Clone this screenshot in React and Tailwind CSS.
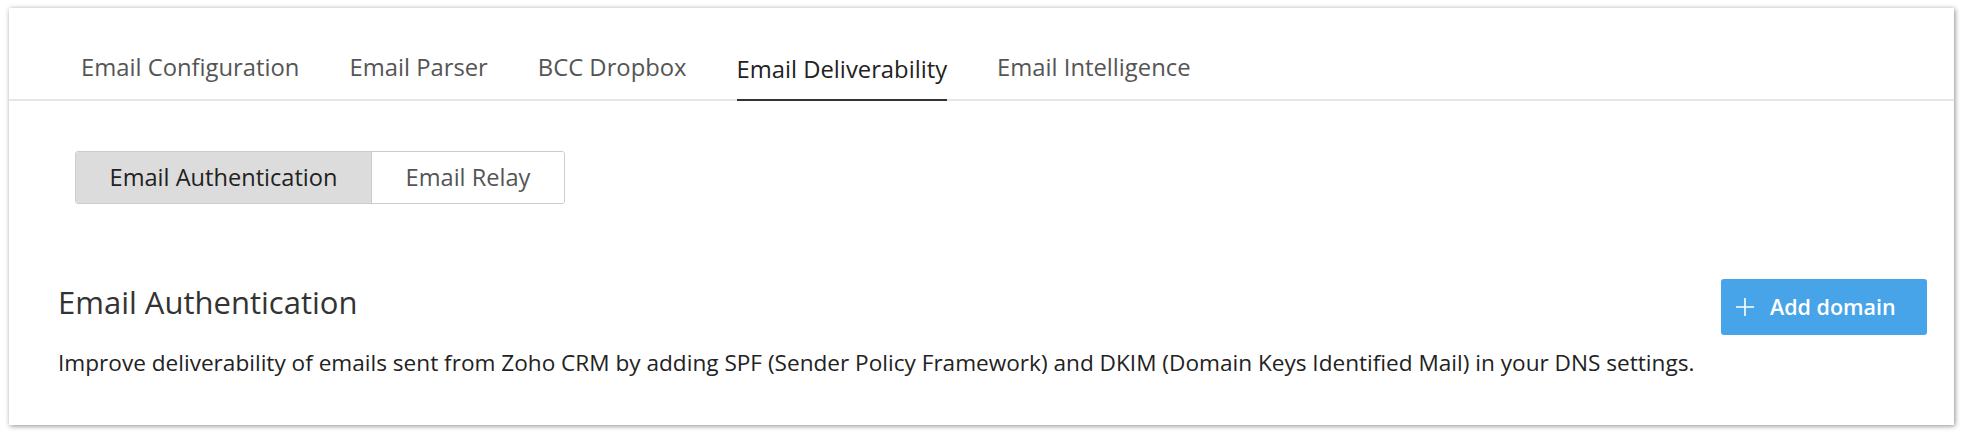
import React from 'react';

const tabs = ['Email Configuration', 'Email Parser', 'BCC Dropbox', 'Email Deliverability', 'Email Intelligence'];

export default function App() {
  const active = 'Email Deliverability';

  return (
    <div className="w-[1963px] h-[434px] bg-white pt-[8px] pl-[9px] pr-[9px] font-['Open_Sans',sans-serif]">
      <div className="h-[417px] bg-white shadow-[1px_1px_5px_rgba(0,0,0,0.45)] flex flex-col">
        {/* Tabs */}
        <div className="h-[93px] border-b-2 border-[#e6e6e6] flex items-end pl-[72px] gap-[50px]">
          {tabs.map((t) => (
            <div
              key={t}
              className={
                t === active
                  ? 'pb-[16px] -mb-[2px] border-b-2 border-[#333] text-[23.8px] leading-[28px] text-[#222]'
                  : 'pb-[18px] text-[23.8px] leading-[28px] text-[#555]'
              }
            >
              {t}
            </div>
          ))}
        </div>

        {/* Sub tabs */}
        <div className="pl-[66px] pt-[50px]">
          <div className="inline-flex h-[53px] border border-[#cccccc] rounded-[3px] overflow-hidden text-[23.6px]">
            <div className="w-[296px] bg-[#dcdcdc] border-r border-[#cccccc] flex items-center justify-center text-[#222]">
              Email Authentication
            </div>
            <div className="w-[192px] bg-white flex items-center justify-center text-[#555]">
              Email Relay
            </div>
          </div>
        </div>

        {/* Section */}
        <div className="pl-[49px] pr-[27px] pt-[75px] flex justify-between items-start">
          <div>
            <h2 className="text-[31px] leading-[36px] text-[#333] mt-[5px]">Email Authentication</h2>
            <p className="mt-[30px] text-[22.6px] leading-[26px] text-[#222]">
              Improve deliverability of emails sent from Zoho CRM by adding SPF (Sender Policy Framework) and DKIM (Domain Keys Identified Mail) in your DNS settings.
            </p>
          </div>
          <button className="w-[206px] h-[56px] bg-[#48a4e8] rounded-[3px] text-white text-[21.5px] font-semibold flex items-center pl-[15px] gap-[16px]">
            <svg width="18" height="18" viewBox="0 0 18 18" fill="none" stroke="white" strokeWidth="1.6">
              <path d="M9 0v18M0 9h18" />
            </svg>
            Add domain
          </button>
        </div>
      </div>
    </div>
  );
}
